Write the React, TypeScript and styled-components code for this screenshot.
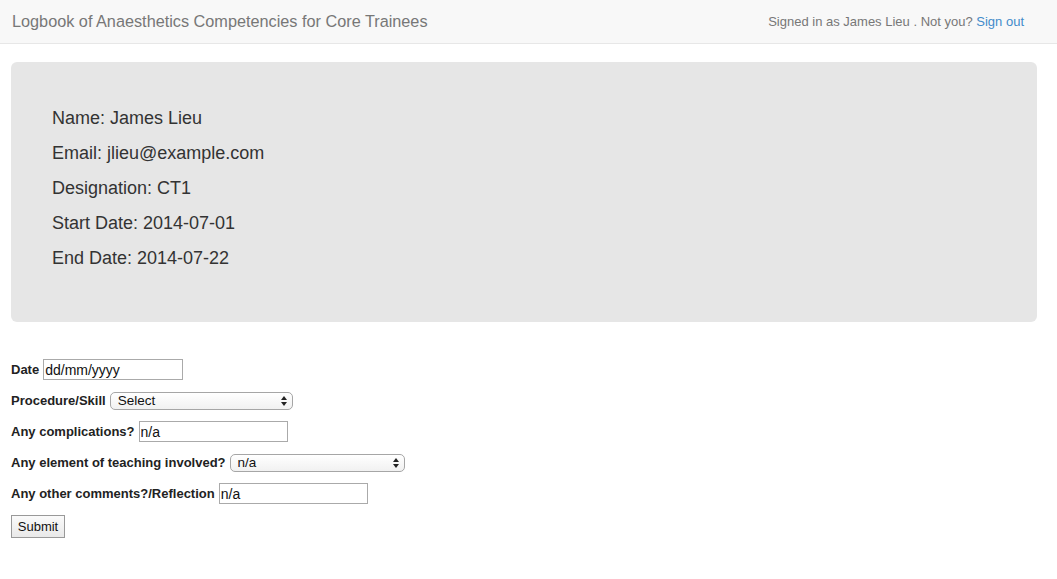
import React from "react";
import styled, { createGlobalStyle } from "styled-components";

const Global = createGlobalStyle`
  html, body { margin: 0; padding: 0; background: #fff; }
  body { font-family: "Liberation Sans", Arial, sans-serif; color: #333; }
`;

const Navbar = styled.nav`
  height: 43px;
  background: #f8f8f8;
  border-bottom: 1px solid #e7e7e7;
  display: flex;
  align-items: center;
  justify-content: space-between;
  padding: 0 33px 0 12px;
`;

const Brand = styled.span`
  font-size: 16.25px;
  color: #777;
`;

const NavText = styled.span`
  font-size: 13px;
  color: #777;
`;

const NavLink = styled.a`
  color: #428bca;
  text-decoration: none;
`;

const Container = styled.div`
  padding: 18px 20px 0 11px;
`;

const Jumbotron = styled.div`
  background: #e6e6e6;
  border-radius: 6px;
  height: 260px;
  box-sizing: border-box;
  padding: 39px 41px;
  display: flex;
  flex-direction: column;
`;

const InfoLine = styled.div`
  font-size: 18px;
  line-height: 35px;
  color: #333;
`;

const Form = styled.form`
  margin-top: 37px;
  display: flex;
  flex-direction: column;
  gap: 10px;
  align-items: flex-start;
`;

const Row = styled.div`
  display: flex;
  align-items: center;
  gap: 4px;
  height: 21px;
`;

const Label = styled.label`
  font-size: 13px;
  font-weight: bold;
  color: #222;
`;

const TextInput = styled.input<{ $w: number }>`
  width: ${(p) => p.$w}px;
  height: 21px;
  box-sizing: border-box;
  border: 1px solid #aaa;
  padding: 0 1px;
  font-family: "Liberation Sans", Arial, sans-serif;
  font-size: 14px;
  color: #111;
  background: #fff;
  outline: none;
`;

const SelectBox = styled.div<{ $w: number }>`
  width: ${(p) => p.$w}px;
  height: 18px;
  box-sizing: border-box;
  border: 1px solid #a6a6a6;
  border-radius: 5px;
  background: linear-gradient(#fff, #f1f1f1);
  display: flex;
  align-items: center;
  justify-content: space-between;
  padding: 0 5px 0 7px;
  font-size: 13.5px;
  color: #111;
`;

const Arrows = styled.svg`
  width: 6px;
  height: 10px;
`;

const SubmitButton = styled.button`
  margin-top: 1px;
  height: 23px;
  width: 54px;
  box-sizing: border-box;
  border: 1px solid #999;
  background: linear-gradient(#fafafa, #e9e9e9);
  font-family: "Liberation Sans", Arial, sans-serif;
  font-size: 13px;
  color: #111;
  padding: 0;
`;

const Select = ({ w, value }: { w: number; value: string }) => (
  <SelectBox $w={w}>
    <span>{value}</span>
    <Arrows viewBox="0 0 6 10">
      <path d="M0 4 L3 0 L6 4 Z M0 6 L3 10 L6 6 Z" fill="#222" />
    </Arrows>
  </SelectBox>
);

export default function App() {
  return (
    <>
      <Global />
      <Navbar>
        <Brand>Logbook of Anaesthetics Competencies for Core Trainees</Brand>
        <NavText>
          Signed in as James Lieu . Not you? <NavLink href="#">Sign out</NavLink>
        </NavText>
      </Navbar>
      <Container>
        <Jumbotron>
          <InfoLine>Name: James Lieu</InfoLine>
          <InfoLine>Email: jlieu@example.com</InfoLine>
          <InfoLine>Designation: CT1</InfoLine>
          <InfoLine>Start Date: 2014-07-01</InfoLine>
          <InfoLine>End Date: 2014-07-22</InfoLine>
        </Jumbotron>
        <Form onSubmit={(e) => e.preventDefault()}>
          <Row>
            <Label>Date</Label>
            <TextInput $w={140} defaultValue="dd/mm/yyyy" />
          </Row>
          <Row>
            <Label>Procedure/Skill</Label>
            <Select w={183} value="Select" />
          </Row>
          <Row>
            <Label>Any complications?</Label>
            <TextInput $w={149} defaultValue="n/a" />
          </Row>
          <Row>
            <Label>Any element of teaching involved?</Label>
            <Select w={175} value="n/a" />
          </Row>
          <Row>
            <Label>Any other comments?/Reflection</Label>
            <TextInput $w={149} defaultValue="n/a" />
          </Row>
          <SubmitButton type="submit">Submit</SubmitButton>
        </Form>
      </Container>
    </>
  );
}
